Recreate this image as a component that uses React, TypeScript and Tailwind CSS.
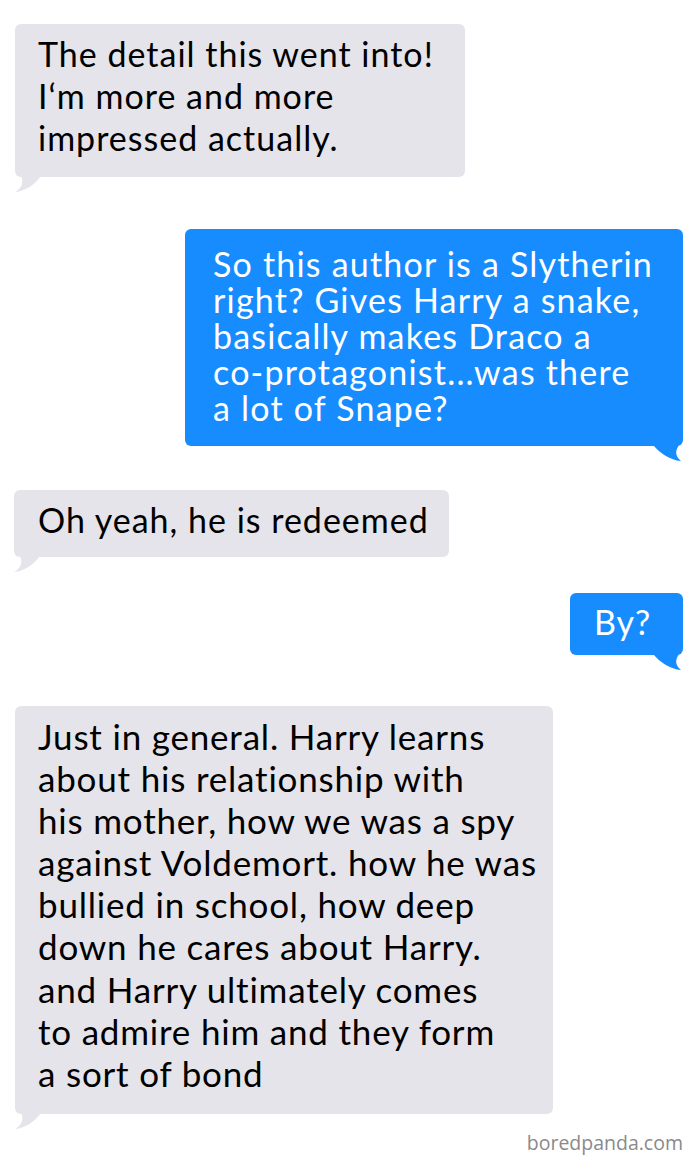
import React from "react";

type Side = "in" | "out";

function Tail({ side }: { side: Side }) {
  if (side === "in") {
    return (
      <svg width="26" height="17" viewBox="0 0 26 17" className="absolute left-0 top-full -mt-px">
        <path d="M26 0 L6 0 C9 6 7 12 0 16 C11 15 19 9 26 0 Z" fill="#e5e4ea" />
      </svg>
    );
  }
  return (
    <svg width="30" height="17" viewBox="0 0 30 17" className="absolute right-0 top-full -mt-px">
      <path d="M0 0 L26 0 C22 6 22 11 28 16 C17 15 8 9 0 0 Z" fill="#168cff" />
    </svg>
  );
}

function Bubble({ side, lines, className }: { side: Side; lines: string[]; className: string }) {
  const base =
    side === "in"
      ? "bg-[#e5e4ea] text-black self-start"
      : "bg-[#168cff] text-white self-end";
  return (
    <div className={`relative rounded-[6px] ${base} ${className}`}>
      {lines.map((l, i) => (
        <div key={i} className="whitespace-nowrap">
          {l}
        </div>
      ))}
      <Tail side={side} />
    </div>
  );
}

export default function App() {
  return (
    <div className="w-[700px] h-[1166px] bg-white flex flex-col font-['Lato','Liberation_Sans',sans-serif] overflow-hidden">
      <div className="flex flex-col pt-[24px] pl-[15px] pr-[17px]">
        <Bubble
          side="in"
          className="w-[450px] h-[153px] pl-[23px] pt-[9px] text-[34px] leading-[42px] tracking-[1px]"
          lines={["The detail this went into!", "I‘m more and more", "impressed actually."]}
        />
        <Bubble
          side="out"
          className="mt-[52px] w-[498px] h-[217px] pl-[28px] pt-[17px] text-[34px] leading-[36px] tracking-[1.2px]"
          lines={[
            "So this author is a Slytherin",
            "right? Gives Harry a snake,",
            "basically makes Draco a",
            "co-protagonist...was there",
            "a lot of Snape?",
          ]}
        />
        <Bubble
          side="in"
          className="mt-[44px] -ml-px w-[435px] h-[67px] pl-[24px] pt-[9px] text-[34px] leading-[42px] tracking-[1px]"
          lines={["Oh yeah, he is redeemed"]}
        />
        <Bubble
          side="out"
          className="mt-[36px] w-[113px] h-[62px] pl-[24px] pt-[8px] text-[34px] leading-[42px] tracking-[1px]"
          lines={["By?"]}
        />
        <Bubble
          side="in"
          className="mt-[51px] w-[538px] h-[408px] pl-[23px] pt-[9px] text-[35px] leading-[42.1px] tracking-[0.8px]"
          lines={[
            "Just in general. Harry learns",
            "about his relationship with",
            "his mother, how we was a spy",
            "against Voldemort. how he was",
            "bullied in school, how deep",
            "down he cares about Harry.",
            "and Harry ultimately comes",
            "to admire him and they form",
            "a sort of bond",
          ]}
        />
      </div>
      <div className="mt-[16px] pr-[17px] self-end text-[19.5px] leading-[26px] text-[#8a8a8a] font-['Open_Sans','Liberation_Sans',sans-serif]">
        boredpanda.com
      </div>
    </div>
  );
}
